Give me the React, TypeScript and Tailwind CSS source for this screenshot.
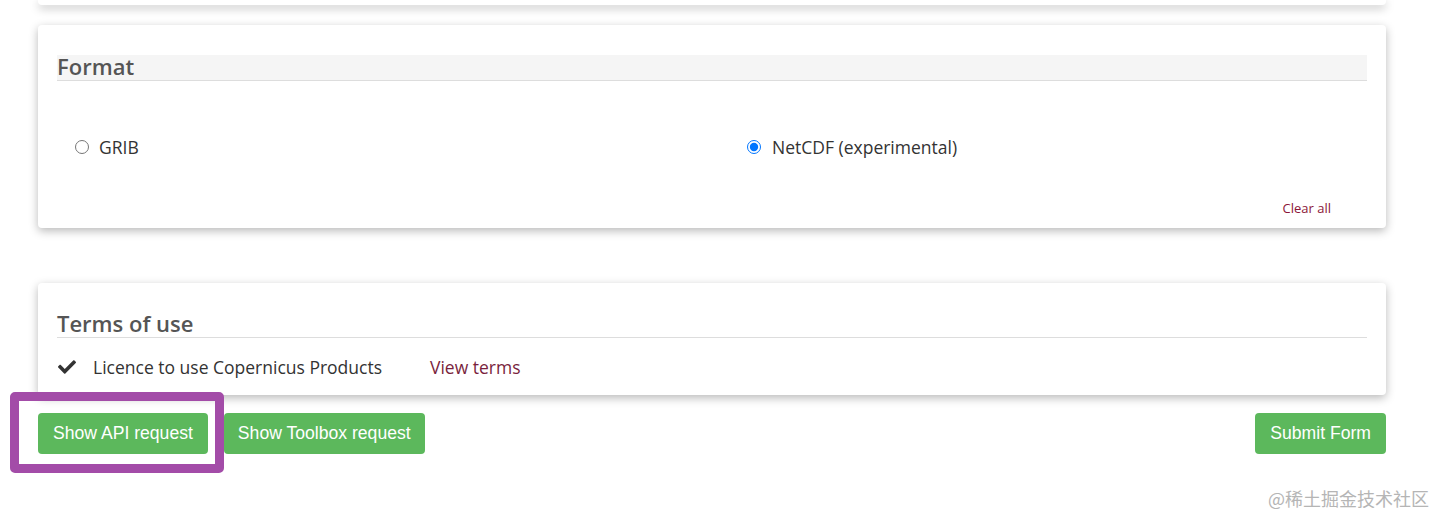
import { FaCheck } from "react-icons/fa";

export default function App() {
  return (
    <div className="relative w-[1435px] h-[516px] overflow-hidden bg-white font-['Open_Sans',sans-serif] text-[#333]">
      <div className="ml-[38px] w-[1348px] flex flex-col">
        {/* bottom edge of the previous card */}
        <div className="h-[5px] bg-white rounded-b-[4px] shadow-[0_3px_10px_rgba(0,0,0,0.28)]" />

        {/* Format card */}
        <div className="mt-[20px] h-[203px] bg-white rounded-[4px] shadow-[0_3px_10px_rgba(0,0,0,0.28)] px-[19px] pt-[30px] flex flex-col">
          <div className="h-[26px] bg-[#f5f5f5] border-b border-[#ddd] flex items-end">
            <h2 className="text-[22px] leading-[26px] font-semibold text-[#555] mb-[1px]">Format</h2>
          </div>
          <div className="mt-[56px] grid grid-cols-2 h-[20px] items-center">
            <label className="flex items-center pl-[18px]">
              <input type="radio" name="format" className="w-[14px] h-[14px] m-0" />
              <span className="ml-[10px] text-[17.5px] leading-[20px]">GRIB</span>
            </label>
            <label className="flex items-center pl-[35px]">
              <input type="radio" name="format" defaultChecked className="w-[14px] h-[14px] m-0" />
              <span className="ml-[11px] text-[17.5px] leading-[20px]">NetCDF (experimental)</span>
            </label>
          </div>
          <div className="mt-[42px] flex justify-end pr-[36px]">
            <a className="text-[13px] leading-[18px] text-[#8b1538]">Clear all</a>
          </div>
        </div>

        {/* Terms card */}
        <div className="mt-[55px] h-[112px] bg-white rounded-[4px] shadow-[0_3px_10px_rgba(0,0,0,0.28)] px-[19px] pt-[29px] flex flex-col">
          <div className="border-b border-[#ddd] h-[26px] flex items-end">
            <h2 className="text-[22px] leading-[26px] font-semibold text-[#555] mb-[1px]">Terms of use</h2>
          </div>
          <div className="mt-[18px] flex items-center h-[22px]">
            <FaCheck className="text-[#333] w-[18px] h-[18px] ml-[1px]" />
            <span className="ml-[17px] text-[17.5px] leading-[22px]">Licence to use Copernicus Products</span>
            <a className="ml-[48px] text-[17.5px] leading-[22px] text-[#7a1f3d]">View terms</a>
          </div>
        </div>

        {/* Buttons */}
        <div className="mt-[18px] flex items-center font-['Liberation_Sans',Arial,sans-serif]">
          <button className="h-[41px] px-[15px] bg-[#5cb85c] text-white text-[17.6px] rounded-[4px]">Show API request</button>
          <button className="ml-[16px] h-[41px] px-[14px] bg-[#5cb85c] text-white text-[17.6px] rounded-[4px]">Show Toolbox request</button>
          <button className="ml-auto h-[41px] px-[15px] bg-[#5cb85c] text-white text-[17.6px] rounded-[4px]">Submit Form</button>
        </div>
      </div>

      {/* highlight annotation */}
      <div className="absolute left-[10px] top-[392px] w-[214px] h-[81px] border-[9px] border-[#a34ca8] rounded-[5px]" />

      {/* watermark */}
      <div className="absolute left-[1268px] top-[486px] text-[18px] leading-[24px] text-[#b5b5b5] font-['Noto_Sans_CJK_SC',sans-serif]">
        @稀土掘金技术社区
      </div>
    </div>
  );
}
